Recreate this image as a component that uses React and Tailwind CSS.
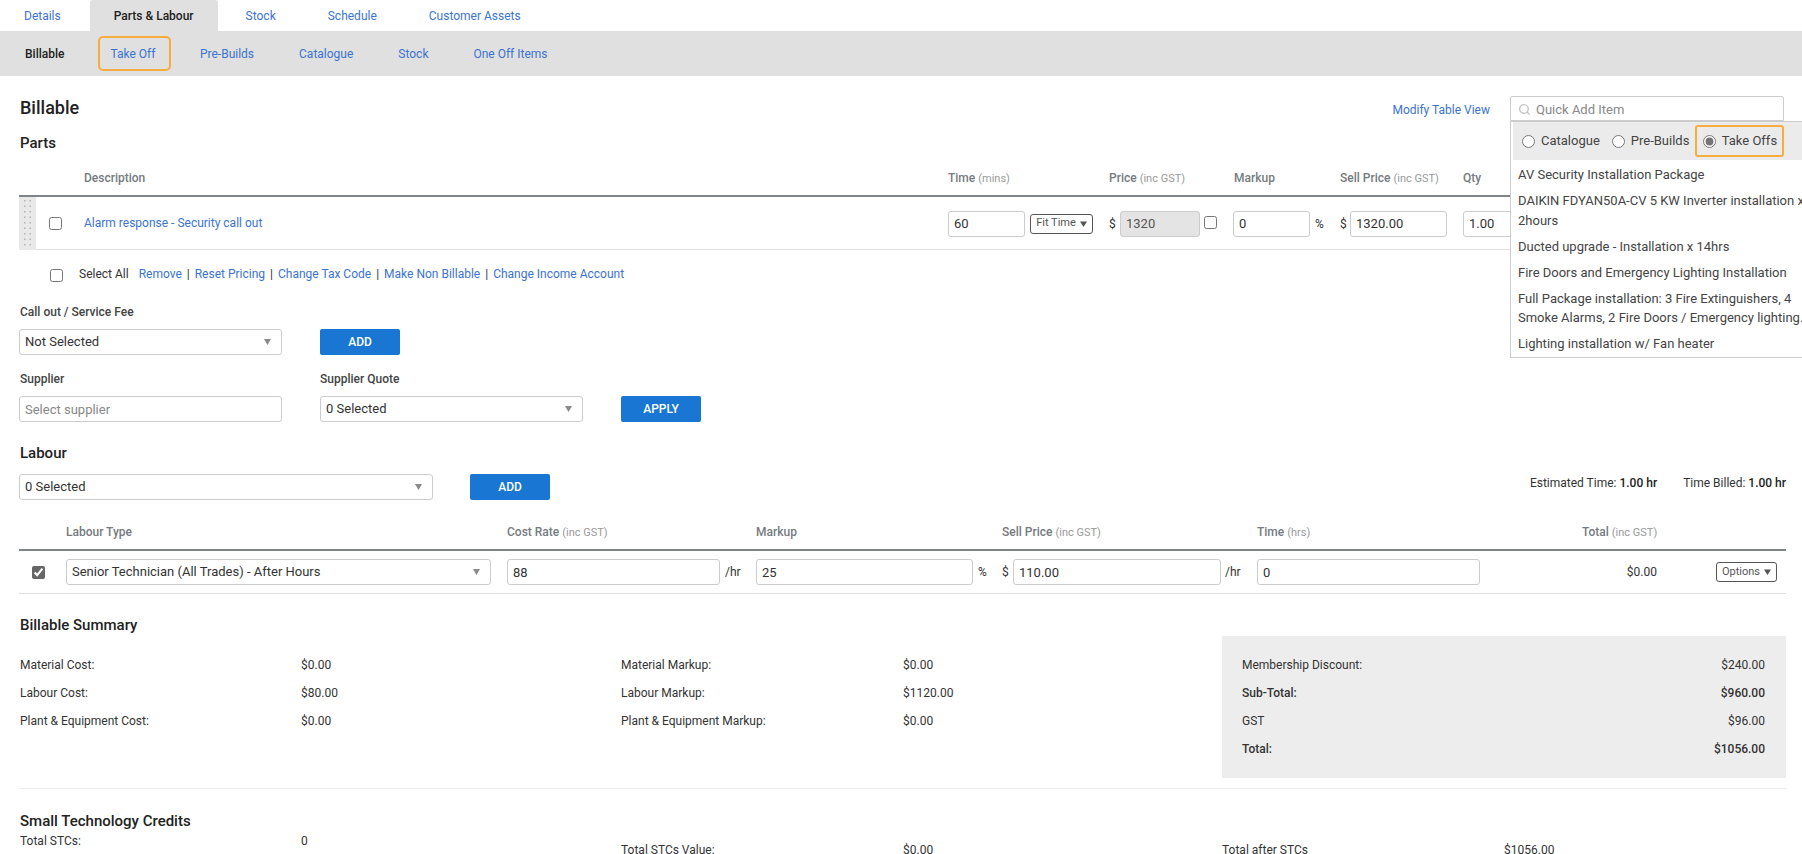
import React from "react";
import { Search } from "lucide-react";

const Link = ({ children, className = "" }) => (
  <span className={"text-[#3b73d1] " + className}>{children}</span>
);

const Arrow = () => (
  <svg width="7" height="6" viewBox="0 0 7 6" className="shrink-0">
    <polygon points="0,0 7,0 3.5,6" fill="#8a8a8a" />
  </svg>
);

const Select = ({ value, className = "" }) => (
  <div className={"flex h-[26px] items-center justify-between rounded-[3px] border border-[#ccc] bg-white pl-[5px] pr-[10px] text-[13px] text-[#333] " + className}>
    <span>{value}</span>
    <Arrow />
  </div>
);

const Field = ({ value, className = "bg-white text-[#333]", w = "" }) => (
  <input
    readOnly
    value={value}
    className={"h-[26px] rounded-[3px] border border-[#ccc] px-[5px] text-[13px] outline-none " + w + " " + className}
  />
);

const Btn = ({ children }) => (
  <button className="h-[26px] w-[80px] rounded-[2px] bg-[#1976d2] text-[12px] font-medium text-white">{children}</button>
);

const Small = ({ children }) => <span className="text-[11px] font-normal leading-none text-[#999]">{children}</span>;

const Th = ({ children, className = "" }) => (
  <div className={"text-[12px] font-medium leading-[14px] text-[#757b80] " + className}>{children}</div>
);

const H2 = ({ children, className = "" }) => (
  <h2 className={"flex h-[20px] items-center pl-px text-[15px] font-medium text-[#222] " + className}>{children}</h2>
);

const MiniBtn = ({ children, className = "" }) => (
  <button className={"flex h-[20px] items-center justify-center gap-[4px] rounded-[3px] border border-[#555] bg-white text-[11px] text-[#555] " + className}>
    {children}
    <svg width="7" height="6" viewBox="0 0 7 6"><polygon points="0,0.5 7,0.5 3.5,6" fill="#555" /></svg>
  </button>
);

const Handle = () => (
  <div className="flex h-full w-[17px] items-start justify-center bg-[#e9e9e9] pt-[3px]">
    <svg width="8" height="50" viewBox="0 0 8 50">
      {[0, 1, 2, 3, 4, 5, 6, 7, 8].map((i) => (
        <g key={i} fill="#b5b5b5">
          <rect x="0" y={i * 5.5} width="1.5" height="1.5" />
          <rect x="5.5" y={i * 5.5} width="1.5" height="1.5" />
        </g>
      ))}
    </svg>
  </div>
);

const Row = ({ label, value, w, strong }) => (
  <div className={"flex h-[28px] items-center text-[12px] text-[#333] " + (strong ? "font-medium" : "")}>
    <span className={w}>{label}</span>
    <span>{value}</span>
  </div>
);

const BoxRow = ({ label, value, strong }) => (
  <div className={"flex h-[28px] items-center justify-between text-[12px] text-[#333] " + (strong ? "font-medium" : "")}>
    <span>{label}</span>
    <span>{value}</span>
  </div>
);

const Radio = ({ label, checked }) => (
  <label className="flex items-center gap-[6px] text-[13px] text-[#444]">
    <input type="radio" readOnly checked={!!checked} className="m-0 h-[13px] w-[13px] accent-[#757575]" />
    {label}
  </label>
);

export default function App() {
  return (
    <div className="h-[854px] w-[1802px] overflow-hidden bg-white font-['Roboto',sans-serif] text-[12px] text-[#333]">
      <div className="flex h-[31px] items-center gap-[4px]">
        <Link className="pl-[24px] pr-[25px]">Details</Link>
        <div className="flex h-full items-center rounded-t-[3px] bg-[#e0e0e0] px-[24px] font-medium text-[#222]">Parts &amp; Labour</div>
        <Link className="px-[24px]">Stock</Link>
        <Link className="px-[24px]">Schedule</Link>
        <Link className="px-[24px]">Customer Assets</Link>
      </div>

      <div className="flex h-[45px] items-center bg-[#e0e0e0] pl-[25px]">
        <span className="font-medium text-[#222]">Billable</span>
        <div className="ml-[34px] flex h-[35px] w-[73px] items-center justify-start rounded-[5px] border-2 border-[#f7ac3e] pl-[10px]">
          <Link>Take Off</Link>
        </div>
        <div className="ml-[28.5px] flex gap-[45px]">
          <Link>Pre-Builds</Link>
          <Link>Catalogue</Link>
          <Link>Stock</Link>
          <Link>One Off Items</Link>
        </div>
      </div>

      <div className="pl-[19px] pr-[16px]">
        <div className="mt-[20px] flex h-[25px] items-center justify-between">
          <h1 className="pb-[3px] pl-px text-[18px] font-medium text-[#222]">Billable</h1>
          <div className="mr-[2px] flex items-center">
            <Link className="mr-[20px] pt-[2px]">Modify Table View</Link>
            <div className="relative h-[25px] w-[274px]">
              <div className="flex h-full items-center gap-[5px] rounded-t-[2px] border border-[#ccc] bg-white pl-[7px] pt-[2px] text-[13px] text-[#888]">
                <Search size={13} strokeWidth={2.5} className="text-[#c4c4c4]" />
                Quick Add Item
              </div>
              <div className="absolute left-0 top-full z-10 h-[237px] w-[320px] border border-[#ccc] bg-white text-[13px] text-[#444]">
                <div className="ml-[2px] flex h-[38px] items-center gap-[12px] bg-[#ebebeb] pl-[9px]">
                  <Radio label="Catalogue" />
                  <Radio label="Pre-Builds" />
                  <div className="-ml-[6px] flex h-[32px] w-[89px] items-center justify-center rounded-[3px] border-2 border-[#f7ac3e]">
                    <Radio label="Take Offs" checked />
                  </div>
                </div>
                <div className="w-[302px] pl-[7px] pt-[2px] leading-[19.5px]">
                  <div className="py-[3.25px]">AV Security Installation Package</div>
                  <div className="py-[3.25px]">DAIKIN FDYAN50A-CV 5 KW Inverter installation x 2hours</div>
                  <div className="py-[3.25px]">Ducted upgrade - Installation x 14hrs</div>
                  <div className="py-[3.25px]">Fire Doors and Emergency Lighting Installation</div>
                  <div className="py-[3.25px]">Full Package installation: 3 Fire Extinguishers, 4 Smoke Alarms, 2 Fire Doors / Emergency lighting.</div>
                  <div className="py-[3.25px]">Lighting installation w/ Fan heater</div>
                </div>
              </div>
            </div>
          </div>
        </div>

        <H2 className="mt-[12px]">Parts</H2>

        <div className="grid h-[44px] grid-cols-[65px_864px_161px_124px_107px_123px_1fr] items-end border-b-2 border-[#808487] pb-[10px]">
          <div />
          <Th>Description</Th>
          <Th>Time <Small>(mins)</Small></Th>
          <Th>Price <Small>(inc GST)</Small></Th>
          <Th className="pl-px">Markup</Th>
          <Th>Sell Price <Small>(inc GST)</Small></Th>
          <Th>Qty</Th>
        </div>

        <div className="grid h-[53px] grid-cols-[65px_864px_161px_124px_107px_123px_1fr] items-center border-b border-[#e0e0e0]">
          <div className="flex h-full items-center">
            <Handle />
            <input type="checkbox" readOnly className="m-0 ml-[13px] h-[13px] w-[13px]" />
          </div>
          <Link className="pb-[2px]">Alarm response - Security call out</Link>
          <div className="flex items-center gap-[5px]">
            <Field value="60" w="w-[77px]" />
            <MiniBtn className="w-[63px]">Fit Time</MiniBtn>
          </div>
          <div className="flex items-center">
            <span className="w-[11px]">$</span>
            <Field value="1320" w="w-[80px]" className="bg-[#e4e4e4] text-[#555]" />
            <input type="checkbox" readOnly className="m-0 mb-[3px] ml-[4px] h-[13px] w-[13px]" />
          </div>
          <div className="flex items-center gap-[5px]">
            <Field value="0" w="w-[77px]" />
            <span>%</span>
          </div>
          <div className="flex items-center">
            <span className="w-[10px]">$</span>
            <Field value="1320.00" w="w-[97px]" />
          </div>
          <Field value="1.00" w="w-[60px]" />
        </div>

        <div className="mt-[14px] flex h-[20px] items-center pl-[31px]">
          <input type="checkbox" readOnly className="m-0 mt-[2px] h-[13px] w-[13px]" />
          <span className="ml-[16px] mr-[10px]">Select All</span>
          <div className="flex gap-[5px]">
            <Link>Remove</Link><span>|</span>
            <Link>Reset Pricing</Link><span>|</span>
            <Link>Change Tax Code</Link><span>|</span>
            <Link>Make Non Billable</Link><span>|</span>
            <Link>Change Income Account</Link>
          </div>
        </div>

        <div className="mt-[18px] flex h-[20px] items-center pl-px font-medium text-[#444]">Call out / Service Fee</div>
        <div className="mt-[7px] flex gap-[38px]">
          <Select value="Not Selected" className="w-[263px]" />
          <Btn>ADD</Btn>
        </div>

        <div className="mt-[14px] flex h-[20px] items-center font-medium text-[#444]">
          <span className="w-[301px] pl-px">Supplier</span>
          <span>Supplier Quote</span>
        </div>
        <div className="mt-[7px] flex gap-[38px]">
          <Field value="Select supplier" w="w-[263px]" className="bg-white text-[#888]" />
          <Select value="0 Selected" className="w-[263px]" />
          <Btn>APPLY</Btn>
        </div>

        <H2 className="mt-[21px]">Labour</H2>
        <div className="mt-[11px] flex items-start">
          <Select value="0 Selected" className="w-[414px]" />
          <div className="ml-[37px]"><Btn>ADD</Btn></div>
          <div className="ml-auto flex gap-[26px] text-[12px] text-[#333]">
            <span>Estimated Time: <b className="font-medium text-[#222]">1.00 hr</b></span>
            <span>Time Billed: <b className="font-medium text-[#222]">1.00 hr</b></span>
          </div>
        </div>

        <div className="grid h-[51px] grid-cols-[47px_441px_249px_246px_255px_1fr] items-end border-b-2 border-[#808487] pb-[10px]">
          <div />
          <Th>Labour Type</Th>
          <Th>Cost Rate <Small>(inc GST)</Small></Th>
          <Th>Markup</Th>
          <Th>Sell Price <Small>(inc GST)</Small></Th>
          <div className="grid grid-cols-[325px_1fr]">
            <Th>Time <Small>(hrs)</Small></Th>
            <Th>Total <Small>(inc GST)</Small></Th>
          </div>
        </div>

        <div className="grid h-[43px] grid-cols-[47px_441px_249px_246px_255px_1fr] items-center border-b border-[#e0e0e0]">
          <div className="pl-[13px]">
            <input type="checkbox" readOnly checked className="m-0 block h-[13px] w-[13px] accent-[#666]" />
          </div>
          <Select value="Senior Technician (All Trades) - After Hours" className="w-[425px]" />
          <div className="flex items-center gap-[5px]">
            <Field value="88" w="w-[213px]" />
            <span>/hr</span>
          </div>
          <div className="flex items-center gap-[5px]">
            <Field value="25" w="w-[217px]" />
            <span>%</span>
          </div>
          <div className="flex items-center">
            <span className="w-[11px]">$</span>
            <Field value="110.00" w="w-[208px]" />
            <span className="ml-[4px]">/hr</span>
          </div>
          <div className="flex items-center">
            <Field value="0" w="w-[223px]" />
            <span className="w-[177px] text-right">$0.00</span>
            <MiniBtn className="ml-[59px] w-[61px]">Options</MiniBtn>
          </div>
        </div>

        <H2 className="mt-[21px]">Billable Summary</H2>

        <div className="mt-px grid grid-cols-[602px_601px_564px]">
          <div className="pl-px pt-[15px]">
            <Row label="Material Cost:" value="$0.00" w="w-[281px]" />
            <Row label="Labour Cost:" value="$80.00" w="w-[281px]" />
            <Row label="Plant & Equipment Cost:" value="$0.00" w="w-[281px]" />
          </div>
          <div className="pt-[15px]">
            <Row label="Material Markup:" value="$0.00" w="w-[282px]" />
            <Row label="Labour Markup:" value="$1120.00" w="w-[282px]" />
            <Row label="Plant & Equipment Markup:" value="$0.00" w="w-[282px]" />
          </div>
          <div className="bg-[#ededed] pb-[15px] pl-[20px] pr-[21px] pt-[15px]">
            <BoxRow label="Membership Discount:" value="$240.00" />
            <BoxRow label="Sub-Total:" value="$960.00" strong />
            <BoxRow label="GST" value="$96.00" />
            <BoxRow label="Total:" value="$1056.00" strong />
          </div>
        </div>

        <div className="mt-[10px] border-t border-[#ececec]" />

        <H2 className="mt-[22px]">Small Technology Credits</H2>
        <div className="grid grid-cols-[602px_601px_564px]">
          <div className="flex h-[20px] items-center pl-px">
            <span className="w-[281px]">Total STCs:</span>
            <span>0</span>
          </div>
          <div className="mt-[9px] flex h-[20px] items-center">
            <span className="w-[282px]">Total STCs Value:</span>
            <span>$0.00</span>
          </div>
          <div className="mt-[9px] flex h-[20px] items-center">
            <span className="w-[282px]">Total after STCs</span>
            <span>$1056.00</span>
          </div>
        </div>
      </div>
    </div>
  );
}
